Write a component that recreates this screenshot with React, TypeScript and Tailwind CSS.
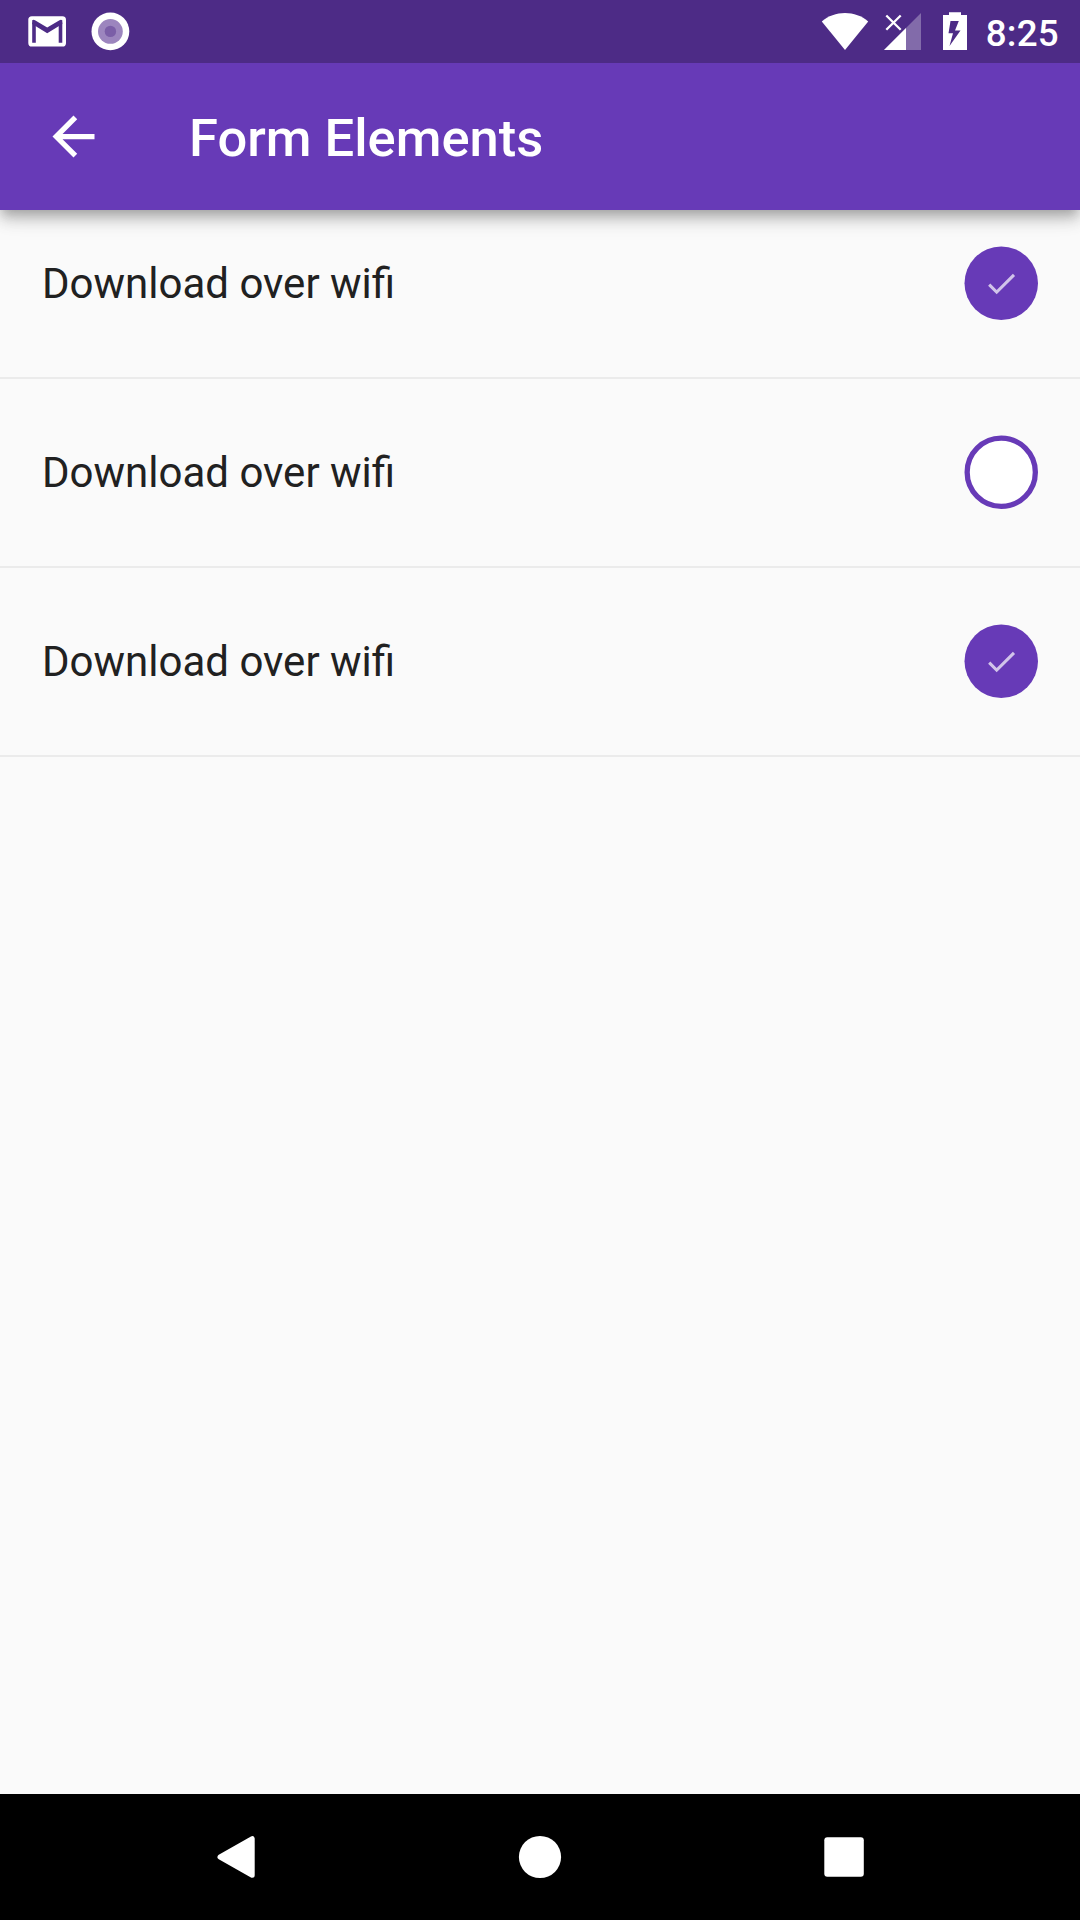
const rows = [
  { label: "Download over wifi", checked: true },
  { label: "Download over wifi", checked: false },
  { label: "Download over wifi", checked: true },
];

function StatusBar() {
  return (
    <div className="relative z-10 flex h-[63px] items-start justify-between bg-[#4d2b86] text-white">
      <svg className="h-[63px] w-[140px]" viewBox="0 0 140 63" fill="none">
        <rect x="28.3" y="16.2" width="37.7" height="30.3" rx="3.6" fill="#fff" />
        <path d="M34 42.7V22.5M60.5 22.5V42.7" stroke="#4d2b86" strokeWidth="3.6" />
        <path d="M32.2 20.2Q33.5 19.3 35 20.2L47.2 27.6L59.5 20.2Q61 19.3 62.3 20.2V24L47.2 33.2L32.2 24Z" fill="#4d2b86" />
        <circle cx="110.4" cy="31.4" r="18.9" fill="#fff" />
        <circle cx="110.4" cy="31.4" r="12.4" fill="#9c85be" />
        <circle cx="110.4" cy="31.4" r="5.7" fill="#7b5ea7" />
      </svg>
      <div className="flex h-[63px] items-start pr-[21px]">
        <svg className="h-[63px] w-[166px]" viewBox="820 0 166 63" fill="none">
          <path d="M845 50L821.8 21.4C828 16 836.5 13 845 13S862 16 868.2 21.4Z" fill="#fff" />
          <path d="M921 13V50H884Z" fill="#fff" fillOpacity=".3" />
          <path d="M906 28V50H884Z" fill="#fff" />
          <path d="M886.3 15.5L900.7 29.7M900.7 15.5L886.3 29.7" stroke="#fff" strokeWidth="2.3" />
          <path
            fillRule="evenodd"
            d="M949 12.3H961V15H967V50H943V15H949ZM950.5 21L948.5 33.2H953L949.5 46L960.5 30.5H955L958.8 21Z"
            fill="#fff"
          />
        </svg>
        <span className="mt-[12px] text-[36.75px] leading-[43px] font-medium tracking-[0.25px]">8:25</span>
      </div>
    </div>
  );
}

function AppBar() {
  return (
    <div className="flex h-[147px] items-center bg-[#673ab7] pl-[42px] text-white shadow-[0_5.25px_10.5px_-2.625px_rgba(0,0,0,0.2),0_10.5px_13.125px_0_rgba(0,0,0,0.14),0_2.625px_26.25px_0_rgba(0,0,0,0.12)]">
      <svg className="size-[63px] shrink-0" viewBox="0 0 24 24" fill="currentColor">
        <path d="M20 11H7.83l5.59-5.59L12 4l-8 8 8 8 1.41-1.41L7.83 13H20v-2z" />
      </svg>
      <h1 className="mt-[2px] ml-[84px] text-[52.5px] leading-[62px] font-medium">Form Elements</h1>
    </div>
  );
}

function RoundCheckbox({ checked }: { checked: boolean }) {
  return (
    <svg className="h-[75px] w-[74px]" viewBox="0 0 74 75">
      {checked ? (
        <>
          <circle cx="37.25" cy="37.25" r="36.75" fill="#673ab7" />
          <path
            transform="translate(18.9 19.2) scale(1.531)"
            d="M9 16.17L4.83 12l-1.42 1.41L9 19 21 7l-1.41-1.41z"
            fill="#fff"
            fillOpacity=".7"
          />
        </>
      ) : (
        <circle cx="37.25" cy="37.25" r="34.1" fill="#fff" stroke="#673ab7" strokeWidth="5.3" />
      )}
    </svg>
  );
}

export default function App() {
  return (
    <div className="flex h-[1920px] w-[1080px] flex-col overflow-hidden bg-[#fafafa] font-[Roboto,sans-serif]">
      <header className="relative z-10">
        <StatusBar />
        <AppBar />
      </header>
      <main className="-mt-[20px] flex-1">
        {rows.map((row, i) => (
          <div
            key={i}
            className="flex h-[189px] items-center justify-between border-b-2 border-[#ebebeb] px-[42px]"
          >
            <span className="text-[42px] leading-[49px] text-[#212121]">{row.label}</span>
            <RoundCheckbox checked={row.checked} />
          </div>
        ))}
      </main>
      <nav className="flex h-[126px] items-center justify-center bg-black">
        <svg className="h-[126px] w-[304px]" viewBox="84 0 304 126" fill="#fff">
          <path d="M220 63L252.2 44.7V81.3Z" stroke="#fff" strokeWidth="5" strokeLinejoin="round" />
        </svg>
        <svg className="h-[126px] w-[304px]" viewBox="388 0 304 126" fill="#fff">
          <circle cx="540" cy="63" r="21.1" />
        </svg>
        <svg className="h-[126px] w-[304px]" viewBox="692 0 304 126" fill="#fff">
          <rect x="824.3" y="43.3" width="39.5" height="39.5" rx="3" />
        </svg>
      </nav>
    </div>
  );
}
